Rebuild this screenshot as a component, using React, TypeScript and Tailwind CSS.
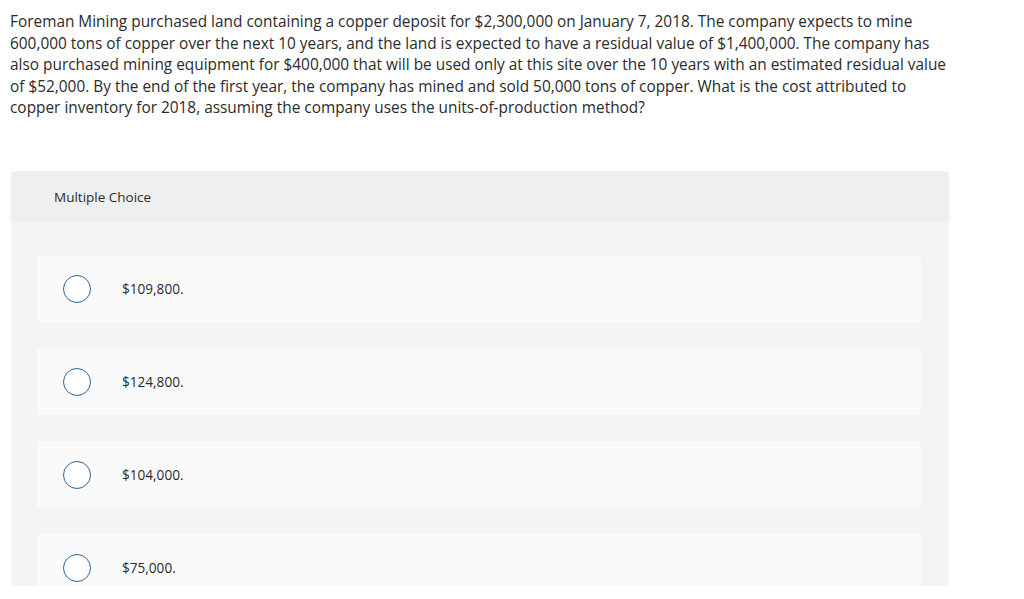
const choices = ['$109,800.', '$124,800.', '$104,000.', '$75,000.']

const lines = [
  'Foreman Mining purchased land containing a copper deposit for $2,300,000 on January 7, 2018. The company expects to mine',
  '600,000 tons of copper over the next 10 years, and the land is expected to have a residual value of $1,400,000. The company has',
  'also purchased mining equipment for $400,000 that will be used only at this site over the 10 years with an estimated residual value',
  'of $52,000. By the end of the first year, the company has mined and sold 50,000 tons of copper. What is the cost attributed to',
  'copper inventory for 2018, assuming the company uses the units-of-production method?'
]

export default function App() {
  return (
    <div
      className="h-[599px] w-[1024px] overflow-hidden bg-white text-[#2b2b2b]"
      style={{ fontFamily: '"Open Sans", "Noto Sans", sans-serif' }}
    >
      {/* question */}
      <div className="pl-[10px] pt-[11px] text-[15.4px] leading-[21.5px]">
        {lines.map((l, i) => (
          <div key={i} className="whitespace-nowrap">
            {l}
          </div>
        ))}
      </div>

      {/* answer panel */}
      <div className="ml-[11px] mt-[52px] h-[415px] w-[938px] overflow-hidden rounded-t-[3px] bg-[#f4f4f4]">
        <div className="flex h-[51px] items-center bg-[#efefef] pl-[43px] pt-[2px] text-[13.5px]">Multiple Choice</div>
        <div className="flex flex-col gap-[26px] pl-[26px] pr-[28px] pt-[33px]">
          {choices.map((c) => (
            <div key={c} className="flex h-[67px] shrink-0 items-center rounded-[4px] bg-[#fafafa] pl-[26px] pt-[2px]">
              <span className="h-[28px] w-[28px] rounded-full border-[1.5px] border-[#2f6396] bg-white" />
              <span className="ml-[31px] text-[13.6px]">{c}</span>
            </div>
          ))}
        </div>
      </div>
    </div>
  )
}
